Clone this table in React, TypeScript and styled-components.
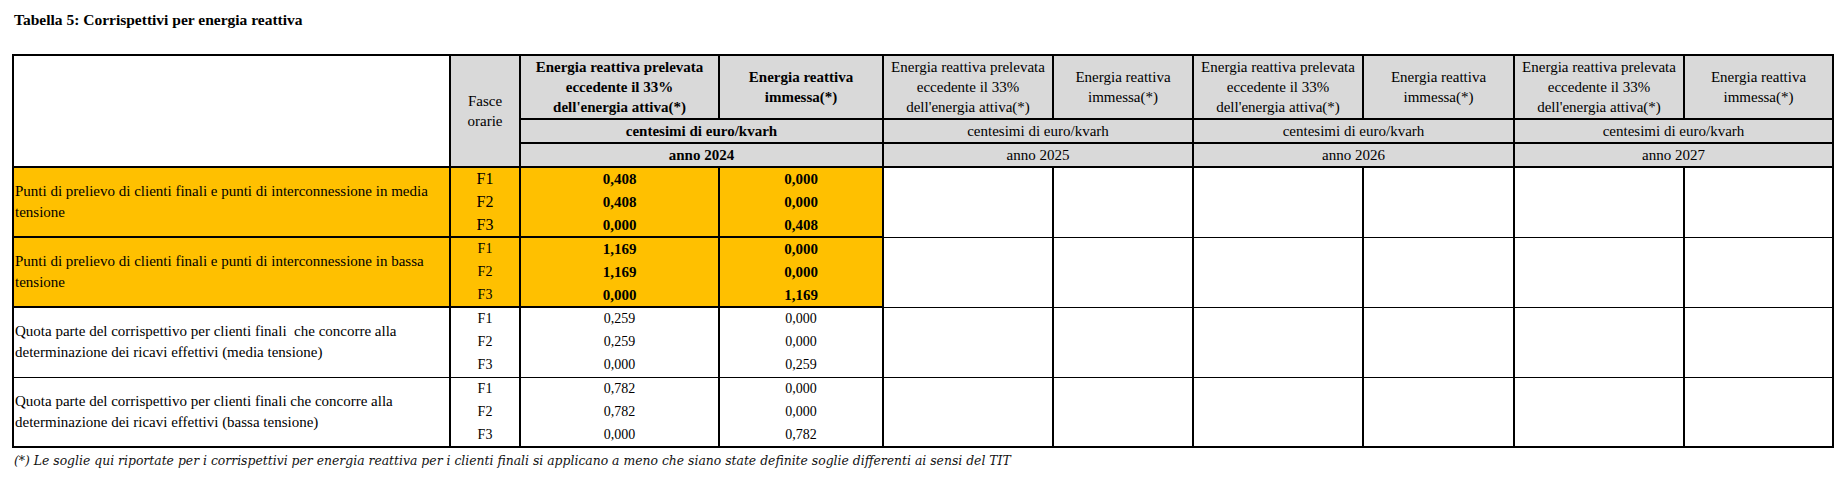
import styled, { createGlobalStyle } from 'styled-components';

type Group = {
  label: string[];
  yellow: boolean;
  values: [string, string][];
};

const groups: Group[] = [
  {
    label: ['Punti di prelievo di clienti finali e punti di interconnessione in media', 'tensione'],
    yellow: true,
    values: [
      ['0,408', '0,000'],
      ['0,408', '0,000'],
      ['0,000', '0,408'],
    ],
  },
  {
    label: ['Punti di prelievo di clienti finali e punti di interconnessione in bassa', 'tensione'],
    yellow: true,
    values: [
      ['1,169', '0,000'],
      ['1,169', '0,000'],
      ['0,000', '1,169'],
    ],
  },
  {
    label: [
      'Quota parte del corrispettivo per clienti finali  che concorre alla',
      'determinazione dei ricavi effettivi (media tensione)',
    ],
    yellow: false,
    values: [
      ['0,259', '0,000'],
      ['0,259', '0,000'],
      ['0,000', '0,259'],
    ],
  },
  {
    label: [
      'Quota parte del corrispettivo per clienti finali che concorre alla',
      'determinazione dei ricavi effettivi (bassa tensione)',
    ],
    yellow: false,
    values: [
      ['0,782', '0,000'],
      ['0,782', '0,000'],
      ['0,000', '0,782'],
    ],
  },
];

const colWidths = [437, 70, 199, 164, 170, 140, 170, 151, 170, 149];
const futureYears = ['2025', '2026', '2027'];
const fasce = ['F1', 'F2', 'F3'];

const GlobalStyle = createGlobalStyle`
  body {
    margin: 0;
    background: #fff;
    color: #000;
    font-family: "Liberation Serif", "Times New Roman", serif;
  }
`;

const App = () => {
  return (
    <Page>
      <GlobalStyle />
      <Title>Tabella 5: Corrispettivi per energia reattiva</Title>
      <Table>
        <colgroup>
          {colWidths.map((w, i) => (
            <col key={i} style={{ width: w }} />
          ))}
        </colgroup>
        <thead>
          <tr>
            <BlankHead rowSpan={3} />
            <HeadCell rowSpan={3}>
              Fasce
              <br />
              orarie
            </HeadCell>
            <HeadCell $bold>
              Energia reattiva prelevata
              <br />
              eccedente il 33%
              <br />
              dell'energia attiva(*)
            </HeadCell>
            <HeadCell $bold>
              Energia reattiva
              <br />
              immessa(*)
            </HeadCell>
            {futureYears.map((y) => [
              <HeadCell key={`p${y}`}>
                Energia reattiva prelevata
                <br />
                eccedente il 33%
                <br />
                dell'energia attiva(*)
              </HeadCell>,
              <HeadCell key={`i${y}`}>
                Energia reattiva
                <br />
                immessa(*)
              </HeadCell>,
            ])}
          </tr>
          <tr>
            <SubHead colSpan={2} $bold>
              centesimi di euro/kvarh
            </SubHead>
            {futureYears.map((y) => (
              <SubHead key={y} colSpan={2}>
                centesimi di euro/kvarh
              </SubHead>
            ))}
          </tr>
          <tr>
            <SubHead colSpan={2} $bold>
              anno 2024
            </SubHead>
            {futureYears.map((y) => (
              <SubHead key={y} colSpan={2}>
                anno {y}
              </SubHead>
            ))}
          </tr>
        </thead>
        <tbody>
          {groups.map((g, gi) =>
            fasce.map((f, ri) => (
              <DataRow key={`${gi}-${f}`} $last={ri === 2}>
                {ri === 0 && (
                  <LabelCell rowSpan={3} $yellow={g.yellow}>
                    {g.label.map((line, li) => (
                      <LabelLine key={li}>{line}</LabelLine>
                    ))}
                  </LabelCell>
                )}
                <FasceCell $yellow={g.yellow} $big={gi === 0} $first={ri === 0} $lastRow={ri === 2}>
                  {f}
                </FasceCell>
                {g.values[ri].map((v, vi) => (
                  <ValueCell key={vi} $yellow={g.yellow} $first={ri === 0} $lastRow={ri === 2}>
                    {v}
                  </ValueCell>
                ))}
                {ri === 0 &&
                  futureYears.map((y) => [
                    <EmptyCell key={`a${y}`} rowSpan={3} />,
                    <EmptyCell key={`b${y}`} rowSpan={3} />,
                  ])}
              </DataRow>
            ))
          )}
        </tbody>
      </Table>
      <Footnote>
        (*) Le soglie qui riportate per i corrispettivi per energia reattiva per i clienti finali si
        applicano a meno che siano state definite soglie differenti ai sensi del TIT
      </Footnote>
    </Page>
  );
};

const Page = styled.div`
  padding: 11px 0 0 12px;
  width: 1833px;
  box-sizing: border-box;
`;

const Title = styled.div`
  font-size: 15.5px;
  font-weight: 700;
  line-height: 18px;
  padding-left: 2px;
  margin-bottom: 25px;
`;

const Table = styled.table`
  border-collapse: collapse;
  table-layout: fixed;
  width: 1820px;
  border: 2px solid #000;
  font-size: 15px;
`;

const BlankHead = styled.th`
  background: #fff;
  border: 2px solid #000;
  padding: 0;
`;

const HeadCell = styled.th<{ $bold?: boolean }>`
  background: #d9d9d9;
  border: 2px solid #000;
  height: 62px;
  padding: 0 2px;
  font-size: 15px;
  line-height: 20px;
  font-weight: ${({ $bold }) => ($bold ? 700 : 400)};
  text-align: center;
  vertical-align: middle;
`;

const SubHead = styled.th<{ $bold?: boolean }>`
  background: #d9d9d9;
  border: 2px solid #000;
  height: 22px;
  padding: 0;
  font-size: 15px;
  line-height: 20px;
  font-weight: ${({ $bold }) => ($bold ? 700 : 400)};
  text-align: center;
  vertical-align: middle;
`;

const DataRow = styled.tr<{ $last?: boolean }>`
  height: ${({ $last }) => ($last ? '24px' : '23px')};
`;

const LabelCell = styled.td<{ $yellow: boolean }>`
  background: ${({ $yellow }) => ($yellow ? '#ffc000' : '#fff')};
  border-style: solid;
  border-color: #000;
  border-width: ${({ $yellow }) => ($yellow ? '2px' : '1px')} 2px;
  padding: 0 2px 0 1px;
  font-size: 15px;
  line-height: 21px;
  text-align: left;
  vertical-align: middle;
`;

const LabelLine = styled.div`
  white-space: pre;
`;

const FasceCell = styled.td<{ $yellow: boolean; $big: boolean; $first: boolean; $lastRow: boolean }>`
  background: ${({ $yellow }) => ($yellow ? '#ffc000' : '#fff')};
  border-left: 2px solid #000;
  border-right: 2px solid #000;
  border-top: ${({ $first, $yellow }) => ($first ? `${$yellow ? 2 : 1}px solid #000` : 'none')};
  border-bottom: ${({ $lastRow, $yellow }) => ($lastRow ? `${$yellow ? 2 : 1}px solid #000` : 'none')};
  padding: 0;
  font-size: ${({ $big }) => ($big ? '16px' : '14px')};
  line-height: 20px;
  text-align: center;
  vertical-align: middle;
`;

const ValueCell = styled.td<{ $yellow: boolean; $first: boolean; $lastRow: boolean }>`
  background: ${({ $yellow }) => ($yellow ? '#ffc000' : '#fff')};
  border-left: 2px solid #000;
  border-right: 2px solid #000;
  border-top: ${({ $first, $yellow }) => ($first ? `${$yellow ? 2 : 1}px solid #000` : 'none')};
  border-bottom: ${({ $lastRow, $yellow }) => ($lastRow ? `${$yellow ? 2 : 1}px solid #000` : 'none')};
  padding: 0;
  font-size: ${({ $yellow }) => ($yellow ? '15px' : '14px')};
  font-weight: ${({ $yellow }) => ($yellow ? 700 : 400)};
  line-height: 20px;
  text-align: center;
  vertical-align: middle;
`;

const EmptyCell = styled.td`
  background: #fff;
  border-style: solid;
  border-color: #000;
  border-width: 1px 2px;
  padding: 0;
`;

const Footnote = styled.div`
  margin-top: 5px;
  padding-left: 2px;
  font-family: "DejaVu Serif", "Liberation Serif", serif;
  font-style: italic;
  font-size: 12.4px;
  line-height: 16px;
  color: #111;
`;

export default App;
